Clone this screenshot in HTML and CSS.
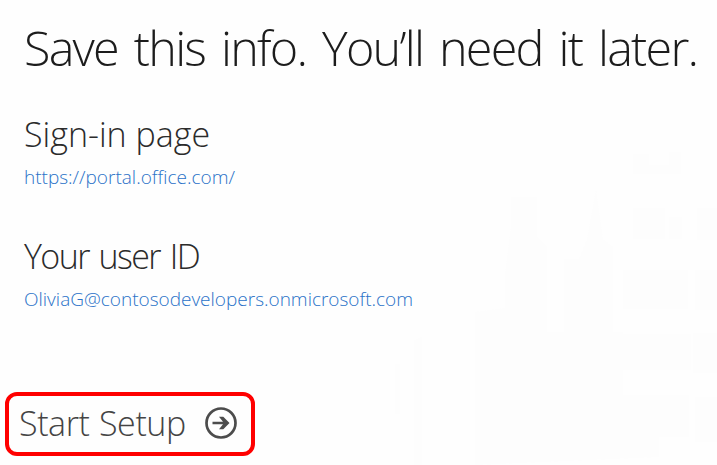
FILE: index.html
```html
<!DOCTYPE html>
<html lang="en">
<head>
<meta charset="utf-8">
<title>Save this info</title>
<link rel="stylesheet" href="styles.css">
</head>
<body>
<svg class="skyline" viewBox="0 0 360 345" aria-hidden="true">
  <path d="M118 345V192l30-4V154l6-48V77h26v40l10 10v85h17v-73h15l8-20 9-50 7 50 10 8v85h10v-62h65v39h-65v25h68v36h-68v25h66v42h-30v20z"/>
  <path d="M276 34h16v11h20V32h12v22h-48zM276 88h32v31h-32zM312 97h13v22h-13zM340 88h20v32h-20zM338 150h22v40h-22zM336 213h24v40h-24zM338 277h22v45h-22zM57 220l8-3v128h-8zM38 244h5v50h-5z"/>
</svg>
<main class="page">
  <h1 class="title">Save this info. You’ll need it later.</h1>
  <section class="info">
    <h2 class="label">Sign-in page</h2>
    <a class="value" href="#">https://portal.office.com/</a>
  </section>
  <section class="info">
    <h2 class="label userid">Your user ID</h2>
    <a class="value" href="#">OliviaG@contosodevelopers.onmicrosoft.com</a>
  </section>
  <button class="start" type="button">
    <span class="start-text">Start Setup</span>
    <svg class="arrow" viewBox="0 0 32 32" aria-hidden="true"><circle cx="16" cy="16" r="14.5"/><path d="M7.500 14.700h10.500L14 9.700h4.300L24.500 16l-6.200 6.300H14l4-5H7.500z"/></svg>
  </button>
</main>
</body>
</html>
```
FILE: styles.css
```css
* { box-sizing: border-box; }
body { margin: 0; background: #fefefe; font-family: "Open Sans", "Noto Sans", sans-serif; font-weight: 300; color: #2b2b2b; }
.skyline { position: absolute; right: 0; bottom: 0; width: 360px; height: 345px; fill: #fdfdfd; }
.page { position: relative; height: 465px; overflow: hidden; display: flex; flex-direction: column; align-items: flex-start; }
.title, .label { margin: 0; font-weight: 300; white-space: nowrap; }
.title { height: 80px; margin: 7px 0 23px 24px; font-size: 48.5px; line-height: 80px; letter-spacing: -1.77px; word-spacing: 5px; color: #1c1c1c; }
.info { height: 122px; padding-left: 24px; }
.label { height: 49px; line-height: 49px; font-size: 34px; letter-spacing: 0; }
.userid { letter-spacing: -1.6px; word-spacing: 2.5px; }
.value { display: block; height: 36px; line-height: 37px; font-size: 19px; color: #2a72c8; text-decoration: none; white-space: nowrap; }
.start { width: 250px; height: 64px; margin: 38px 0 0 5px; padding: 0 14px 0 10px; display: flex; align-items: center; justify-content: space-between; border: 4px solid #f00; border-radius: 12px; background: transparent; font: 300 34px "Open Sans", sans-serif; color: #444; }
.start-text { margin-top: -2px; white-space: nowrap; letter-spacing: -0.4px; word-spacing: 1px; }
.arrow { width: 32px; height: 32px; margin-top: -2px; fill: #4c4c4c; }
.arrow circle { fill: none; stroke: #4c4c4c; stroke-width: 2.7; }
```
